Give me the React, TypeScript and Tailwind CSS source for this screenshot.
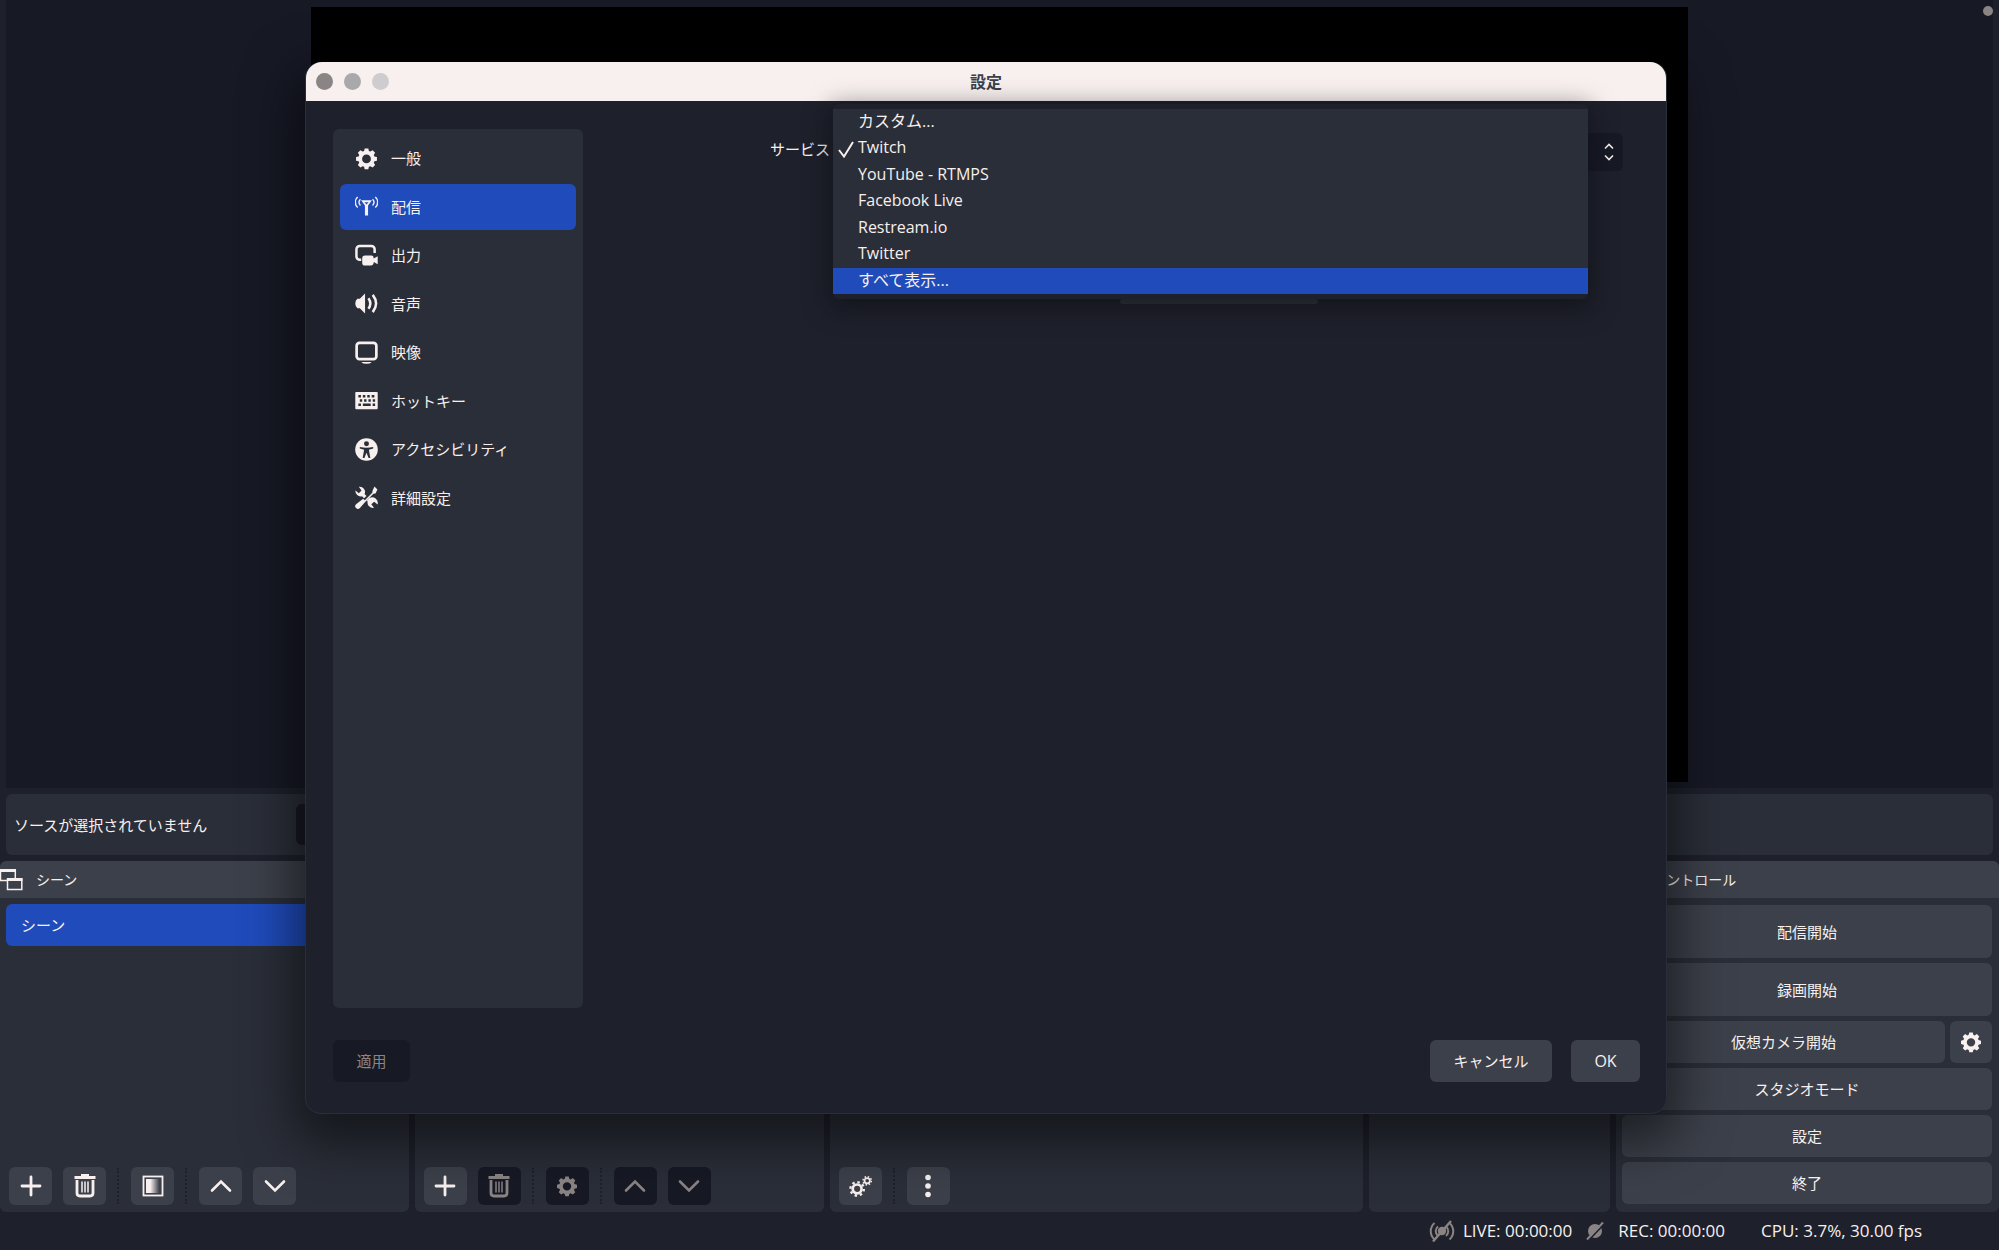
import type { ReactNode } from "react";

const cn = "size-[23px] shrink-0";

const GearIcon = ({ className = "size-[22px] shrink-0" }: { className?: string }) => (
  <svg viewBox="0 0 24 24" className={className} fill="currentColor" fillRule="evenodd">
    <path d="M10.1 1.500h3.800l.6 2.700 1.500.6 2.400-1.400 2.600 2.600-1.400 2.400.6 1.500 2.700.6v3.800l-2.700.6-.6 1.500 1.400 2.400-2.600 2.600-2.400-1.400-1.500.6-.6 2.700h-3.800l-.6-2.700-1.500-.6-2.400 1.400L3 18.800l1.400-2.400-.6-1.500-2.700-.6v-3.800l2.700-.6.6-1.500L3 6l2.600-2.600L8 4.800l1.500-.6zM12 7.800a4.600 4.600 0 1 0 0 9.200 4.600 4.600 0 0 0 0-9.200z" />
  </svg>
);

const StreamIcon = () => (
  <svg viewBox="1 1 22 22" className={cn} fill="none" stroke="currentColor" strokeWidth="1.300">
    <path d="M3.600 3c-3 2.500-3 7.500 0 10M20.400 3c3 2.500 3 7.500 0 10M6.200 5c-1.700 1.800-1.700 4.200 0 6M17.800 5c1.700 1.800 1.700 4.200 0 6" />
    <path d="M6.800 6h10.400L13.500 11v9.500h-3V11z M10 8h4l-2 2z" fill="currentColor" fillRule="evenodd" stroke="none" />
  </svg>
);

const OutputIcon = () => (
  <svg viewBox="0 0 24 24" className={cn}>
    <path d="M6.500 16.500H5a3.500 3.500 0 0 1-3.500-3.500V5.500A3.500 3.500 0 0 1 5 2h12a3.500 3.500 0 0 1 3.500 3.500v4" fill="none" stroke="currentColor" strokeWidth="2.600" />
    <path d="M10.500 12h6.500a2.500 2.500 0 0 1 2.500 2.500v.5l4.200-2.300v8.300l-4.200-2.200a3.500 3.500 0 0 1-2.500 3.700h-6.500a3 3 0 0 1-3-3V15a3 3 0 0 1 3-3z" fill="currentColor" />
  </svg>
);

const AudioIcon = () => (
  <svg viewBox="0 0 24 24" className={cn}>
    <path d="M10.500 1.500v21L5 17H2.500Q.3 15.500.3 12T2.500 7H5z" fill="currentColor" />
    <path d="M14 6.500q4 5.500 0 11M18.500 3q7 9 0 18" fill="none" stroke="currentColor" strokeWidth="2.600" />
  </svg>
);

const VideoIcon = () => (
  <svg viewBox="0 0 24 24" className={cn}>
    <rect x="1.700" y="2" width="20.600" height="17" rx="3" fill="none" stroke="currentColor" strokeWidth="2.800" />
    <path d="M6.500 21.800h11q-1.500 2-5.500 2t-5.500-2z" fill="currentColor" />
  </svg>
);

const KeyboardIcon = () => (
  <svg viewBox="0 0 24 24" className={cn}>
    <rect x=".3" y="3" width="23.400" height="18" rx="1" fill="currentColor" />
    <path d="M3.500 7.500h2.700m2 0h2.600m2 0h2.600m2 0h2.800M5 12h2.500m2 0h2.500m2 0h2.500m2 0h2.500M3.500 16.500h2.700m2 0h8.200m2 0h2.600" stroke="#2a2e38" strokeWidth="2.600" />
  </svg>
);

const AccessibilityIcon = () => (
  <svg viewBox="0 0 24 24" className={cn}>
    <circle cx="12" cy="12" r="11.800" fill="currentColor" />
    <circle cx="12" cy="6" r="2.600" fill="#2a2e38" />
    <path d="M5 9.500q7 1.500 14 0v1.500l-4.500 1.200 1.500 8.600h-1.800L12 15.500l-2.200 5.300H8l1.500-8.600L5 11z" fill="#2a2e38" />
  </svg>
);

const ToolsIcon = () => (
  <svg viewBox="0 0 24 24" className={cn} fill="currentColor">
    <path d="M20.300.6l3.100 3.100-2 4-2.200.5-8 8-1.200-1.200 8-8 .4-2.300z" />
    <path d="M8.500 13.200l2.800 2.800-6.200 7a2.700 2.700 0 0 1-4-4z" />
    <path d="M4 .8a5.500 5.500 0 0 1 6 7.600l2 2-2.500 2.500-2.200-2.200A5.500 5.500 0 0 1 .5 4.600L4 7.500 6.800 4.800z" />
    <path d="M15 12.500a6 6 0 0 1 8.600 6.800L20 16.500 17 19l2.800 3.800a5.800 5.800 0 0 1-6.700-6.700L12.500 15z" />
  </svg>
);

const TrashIcon = () => (
  <svg viewBox="0 0 22 24" className="h-6 w-[22px]" fill="none" stroke="currentColor">
    <path d="M.5 3.500h21M7 1.500h8" strokeWidth="2.800" />
    <path d="M3 6v13q0 3 3 3h10q3 0 3-3V6" strokeWidth="2.800" />
    <path d="M8 7.500v11M11 7.500v11M14 7.500v11" strokeWidth="1.500" />
  </svg>
);

const PlusIcon = () => (
  <svg viewBox="0 0 22 22" className="size-[22px]" stroke="currentColor" strokeWidth="2.800" strokeLinecap="round">
    <path d="M11 2v18M2 11h18" />
  </svg>
);

const UpIcon = () => (
  <svg viewBox="0 0 22 22" className="size-[22px]" fill="none" stroke="currentColor" strokeWidth="2.600" strokeLinecap="round">
    <path d="M2 15.500 11 6.500l9 9" />
  </svg>
);

const DownIcon = () => (
  <svg viewBox="0 0 22 22" className="size-[22px]" fill="none" stroke="currentColor" strokeWidth="2.600" strokeLinecap="round">
    <path d="M2 6.500l9 9 9-9" />
  </svg>
);

const FilterIcon = () => (
  <svg viewBox="0 0 22 22" className="size-[22px]">
    <defs>
      <linearGradient id="fade">
        <stop offset=".3" stopColor="#f7f0ee" />
        <stop offset=".95" stopColor="#f7f0ee" stopOpacity="0" />
      </linearGradient>
    </defs>
    <rect x="1.500" y="1.500" width="19" height="19" fill="none" stroke="currentColor" strokeWidth="1.800" />
    <rect x="4" y="4" width="14" height="14" fill="url(#fade)" />
  </svg>
);

const GearsIcon = () => (
  <svg viewBox="0 0 24 24" className="size-[23px]" fill="none" stroke="currentColor">
    <circle cx="8.500" cy="14.500" r="4.600" strokeWidth="2.800" />
    <circle cx="8.500" cy="14.500" r="7" strokeWidth="2.400" strokeDasharray="2.600 2.900" />
    <circle cx="19" cy="6" r="2.800" strokeWidth="1.800" />
    <circle cx="19" cy="6" r="4.300" strokeWidth="1.600" strokeDasharray="1.600 1.780" />
  </svg>
);

const DotsIcon = () => (
  <svg viewBox="0 0 24 24" className="size-6" fill="currentColor">
    <circle cx="12" cy="3.500" r="2.800" />
    <circle cx="12" cy="12" r="2.800" />
    <circle cx="12" cy="20.500" r="2.800" />
  </svg>
);

const WindowsIcon = () => (
  <svg viewBox="0 0 23 23" className="size-[23px]" fill="none" stroke="currentColor" strokeWidth="1.500">
    <path d="M7 12.500H.5V2h14.800v8M7.500 11h14.300v10.500H7.500z" />
    <path d="M0 2.500h16M7 11.500h15.500" strokeWidth="3" />
  </svg>
);

const LiveIcon = () => (
  <svg viewBox="0 0 26 24" className="h-6 w-[26px]" fill="none" stroke="currentColor" strokeWidth="2">
    <path d="M5.500 4c-5 4.500-5 12 0 16.500M9 7.500c-3 2.500-3 7 0 9.500M20.500 4c5 4.500 5 12 0 16.500M17 7.500c3 2.500 3 7 0 9.500" />
    <circle cx="13" cy="12" r="3.200" fill="currentColor" />
    <path d="M4 22.500 22 2" strokeWidth="2.400" />
  </svg>
);

const RecIcon = () => (
  <svg viewBox="0 0 18 20" className="h-5 w-[18px]">
    <circle cx="9" cy="10" r="7" fill="currentColor" />
    <path d="M2 20 18 3" stroke="#1e202b" strokeWidth="1.800" />
    <path d="M1 18.500 17 1.500" stroke="currentColor" strokeWidth="2" />
  </svg>
);

const navItems = [
  { label: "一般", icon: <GearIcon className={cn} /> },
  { label: "配信", icon: <StreamIcon />, active: true },
  { label: "出力", icon: <OutputIcon /> },
  { label: "音声", icon: <AudioIcon /> },
  { label: "映像", icon: <VideoIcon /> },
  { label: "ホットキー", icon: <KeyboardIcon /> },
  { label: "アクセシビリティ", icon: <AccessibilityIcon /> },
  { label: "詳細設定", icon: <ToolsIcon /> },
];

const services = ["カスタム...", "Twitch", "YouTube - RTMPS", "Facebook Live", "Restream.io", "Twitter", "すべて表示..."];

const ToolButton = ({ label, disabled, children }: { label: string; disabled?: boolean; children: ReactNode }) => (
  <button
    aria-label={label}
    disabled={disabled}
    className={`flex h-[38px] w-[43px] shrink-0 items-center justify-center rounded-md ${
      disabled ? "bg-[#171925] text-[#8b8484]" : "bg-[#3c404a]"
    }`}
  >
    {children}
  </button>
);

const Separator = () => <span className="h-9 w-[3px] shrink-0 border-l-2 border-dotted border-[#1e202b]" />;

const ControlButton = ({ children, tall }: { children: ReactNode; tall?: boolean }) => (
  <button className={`w-full rounded-md bg-[#3c404a] ${tall ? "h-[53px]" : "h-[42px]"}`}>{children}</button>
);

const SettingsDialog = () => (
  <section
    role="dialog"
    aria-label="設定"
    className="absolute inset-x-0 top-[62px] ml-[305px] mr-[332px] flex h-[1052px] flex-col rounded-2xl border border-t-0 border-[#2a2e38] bg-[#1e202b] shadow-[0_18px_50px_12px_rgba(0,0,0,0.5)]"
  >
    <header className="grid h-[39px] shrink-0 grid-cols-[1fr_auto_1fr] items-center rounded-t-2xl bg-[#f7f0ee] px-[10px] text-[#3c404a]">
      <div className="flex gap-[11px]">
        <button aria-label="閉じる" className="size-[17px] rounded-full bg-[#8b8484]" />
        <button aria-label="しまう" className="size-[17px] rounded-full bg-[#a9a8aa]" />
        <button aria-label="拡大" className="size-[17px] rounded-full bg-[#cfcccf]" />
      </div>
      <h1 className="text-base font-bold">設定</h1>
    </header>

    <div className="flex min-h-0 flex-1 gap-6 px-[27px] pt-7">
      <nav className="w-[250px] shrink-0 rounded-md bg-[#2a2e38] px-[7px] py-[6px]">
        <ul className="flex h-[386px] flex-col justify-between">
          {navItems.map((item) => (
            <li key={item.label}>
              <button
                className={`flex h-[46px] w-full items-center gap-[13px] rounded-md px-[15px] ${
                  item.active ? "bg-[#1f4bbb]" : ""
                }`}
              >
                {item.icon}
                {item.label}
              </button>
            </li>
          ))}
        </ul>
      </nav>

      <div className="relative flex-1">
        <div className="mr-4 flex items-center gap-1 pl-[163px] pt-1">
          <label htmlFor="service" className="shrink-0 pb-[6px]">サービス</label>
          <div className="relative ml-1 flex-1">
            <select id="service" defaultValue="Twitch" className="h-[38px] w-full appearance-none rounded-md bg-[#171925] px-4 text-base">
              {services.map((service) => (
                <option key={service}>{service}</option>
              ))}
            </select>
            <svg viewBox="0 0 10 18" className="pointer-events-none absolute right-[9px] top-[10px] h-[18px] w-[10px]" fill="none" stroke="currentColor" strokeWidth="1.600">
              <path d="M1 5.500l4-4 4 4M1 12.500l4 4 4-4" />
            </svg>
          </div>
        </div>
        <div className="pl-[191px] pt-32">
          <div className="mx-auto h-[5px] w-[198px] rounded-full bg-[#2f323d]" />
        </div>

        {/* Open service list */}
        <ul
          role="listbox"
          aria-label="サービス"
          className="absolute -top-[25px] left-[226px] right-[51px] grid h-[195px] auto-rows-fr rounded-md bg-[#1e202b] py-[5px] text-base leading-6 shadow-[0_6px_24px_4px_rgba(10,11,18,0.5)]"
        >
          {services.map((service) => (
            <li
              key={service}
              role="option"
              aria-selected={service === "Twitch"}
              className={`flex items-start pl-1 ${service === "すべて表示..." ? "bg-[#1f4bbb]" : "bg-[#2a2e38]"}`}
            >
              <span className="flex h-full w-[21px] shrink-0 items-center">
                {service === "Twitch" && (
                  <svg viewBox="0 0 18 18" className="size-[18px]" fill="none" stroke="currentColor" strokeWidth="2">
                    <path d="M2 10l5 6.500L16 2" />
                  </svg>
                )}
              </span>
              {service}
            </li>
          ))}
        </ul>
      </div>
    </div>

    <footer className="flex shrink-0 items-center gap-[19px] pb-[31px] pl-[27px] pr-[26px] pt-8">
      <button disabled className="mr-auto h-[42px] w-[77px] rounded-md bg-[#171925] text-[#8b8484]">適用</button>
      <button className="h-[42px] w-[122px] rounded-md bg-[#3c404a]">キャンセル</button>
      <button className="h-[42px] w-[69px] rounded-md bg-[#3c404a] text-base">OK</button>
    </footer>
  </section>
);

export default function App() {
  return (
    <div className="relative flex min-h-screen flex-col overflow-hidden bg-[#1e202b] font-['Open_Sans','Noto_Sans_CJK_JP',sans-serif] text-[15px] leading-5 text-[#f7f0ee]">
      <main className="relative mx-[6px] h-[788px] bg-[#171925] px-[305px] pt-[7px]">
        <div className="h-[775px] bg-black" />
        <span className="absolute right-0 top-[6px] size-[10px] rounded-full bg-[#8b8484]" />
      </main>

      <div className="mx-[6px] mt-[6px] flex h-[61px] items-center rounded-md bg-[#2a2e38] pl-2">
        <p className="w-[282px]">ソースが選択されていません</p>
        <button aria-label="プロパティ" className="h-[41px] w-28 rounded-md bg-[#171925]" />
      </div>

      <div className="mt-[6px] grid h-[351px] grid-cols-[409fr_409fr_534fr_241fr_383fr] gap-x-[6px]">
        <section className="flex flex-col rounded-md bg-[#2a2e38]">
          <h2 className="flex h-[37px] items-center gap-[13px] rounded-t-md bg-[#3c404a] text-sm">
            <WindowsIcon />
            シーン
          </h2>
          <ul className="flex-1 p-[6px]">
            <li className="rounded-md bg-[#1f4bbb] px-[15px] py-[11px]">シーン</li>
          </ul>
          <div className="flex items-center gap-[11px] px-[9px] pb-[7px]">
            <ToolButton label="シーンを追加"><PlusIcon /></ToolButton>
            <ToolButton label="シーンを削除"><TrashIcon /></ToolButton>
            <Separator />
            <ToolButton label="フィルタ"><FilterIcon /></ToolButton>
            <Separator />
            <ToolButton label="上へ移動"><UpIcon /></ToolButton>
            <ToolButton label="下へ移動"><DownIcon /></ToolButton>
          </div>
        </section>

        <section className="flex flex-col justify-end rounded-md bg-[#2a2e38]">
          <div className="flex items-center gap-[11px] px-[9px] pb-[7px]">
            <ToolButton label="ソースを追加"><PlusIcon /></ToolButton>
            <ToolButton label="ソースを削除" disabled><TrashIcon /></ToolButton>
            <Separator />
            <ToolButton label="ソースのプロパティ" disabled><GearIcon /></ToolButton>
            <Separator />
            <ToolButton label="ソースを上へ移動" disabled><UpIcon /></ToolButton>
            <ToolButton label="ソースを下へ移動" disabled><DownIcon /></ToolButton>
          </div>
        </section>

        <section className="flex flex-col justify-end rounded-md bg-[#2a2e38]">
          <div className="flex items-center gap-[11px] px-[9px] pb-[7px]">
            <ToolButton label="オーディオの詳細"><GearsIcon /></ToolButton>
            <Separator />
            <ToolButton label="メニュー"><DotsIcon /></ToolButton>
          </div>
        </section>

        <section className="rounded-md bg-[#2a2e38]" />

        <section className="rounded-md bg-[#2a2e38]">
          <h2 className="flex h-[37px] items-center rounded-t-md bg-[#3c404a] pl-9 text-sm">コントロール</h2>
          <div className="flex flex-col gap-[5px] pl-[6px] pr-[7px] pt-[7px]">
            <ControlButton tall>配信開始</ControlButton>
            <ControlButton tall>録画開始</ControlButton>
            <div className="flex gap-[5px]">
              <ControlButton>仮想カメラ開始</ControlButton>
              <button aria-label="仮想カメラの設定" className="flex w-[42px] shrink-0 items-center justify-center rounded-md bg-[#3c404a]">
                <GearIcon />
              </button>
            </div>
            <ControlButton>スタジオモード</ControlButton>
            <ControlButton>設定</ControlButton>
            <ControlButton>終了</ControlButton>
          </div>
        </section>
      </div>

      <footer className="flex flex-1 items-center justify-end pr-[77px] text-[17px]">
        <span className="text-[#8b8484]"><LiveIcon /></span>
        <span className="ml-2">LIVE: 00:00:00</span>
        <span className="ml-[14px] text-[#8b8484]"><RecIcon /></span>
        <span className="ml-[14px]">REC: 00:00:00</span>
        <span className="ml-9">CPU: 3.7%, 30.00 fps</span>
      </footer>

      <SettingsDialog />
    </div>
  );
}
